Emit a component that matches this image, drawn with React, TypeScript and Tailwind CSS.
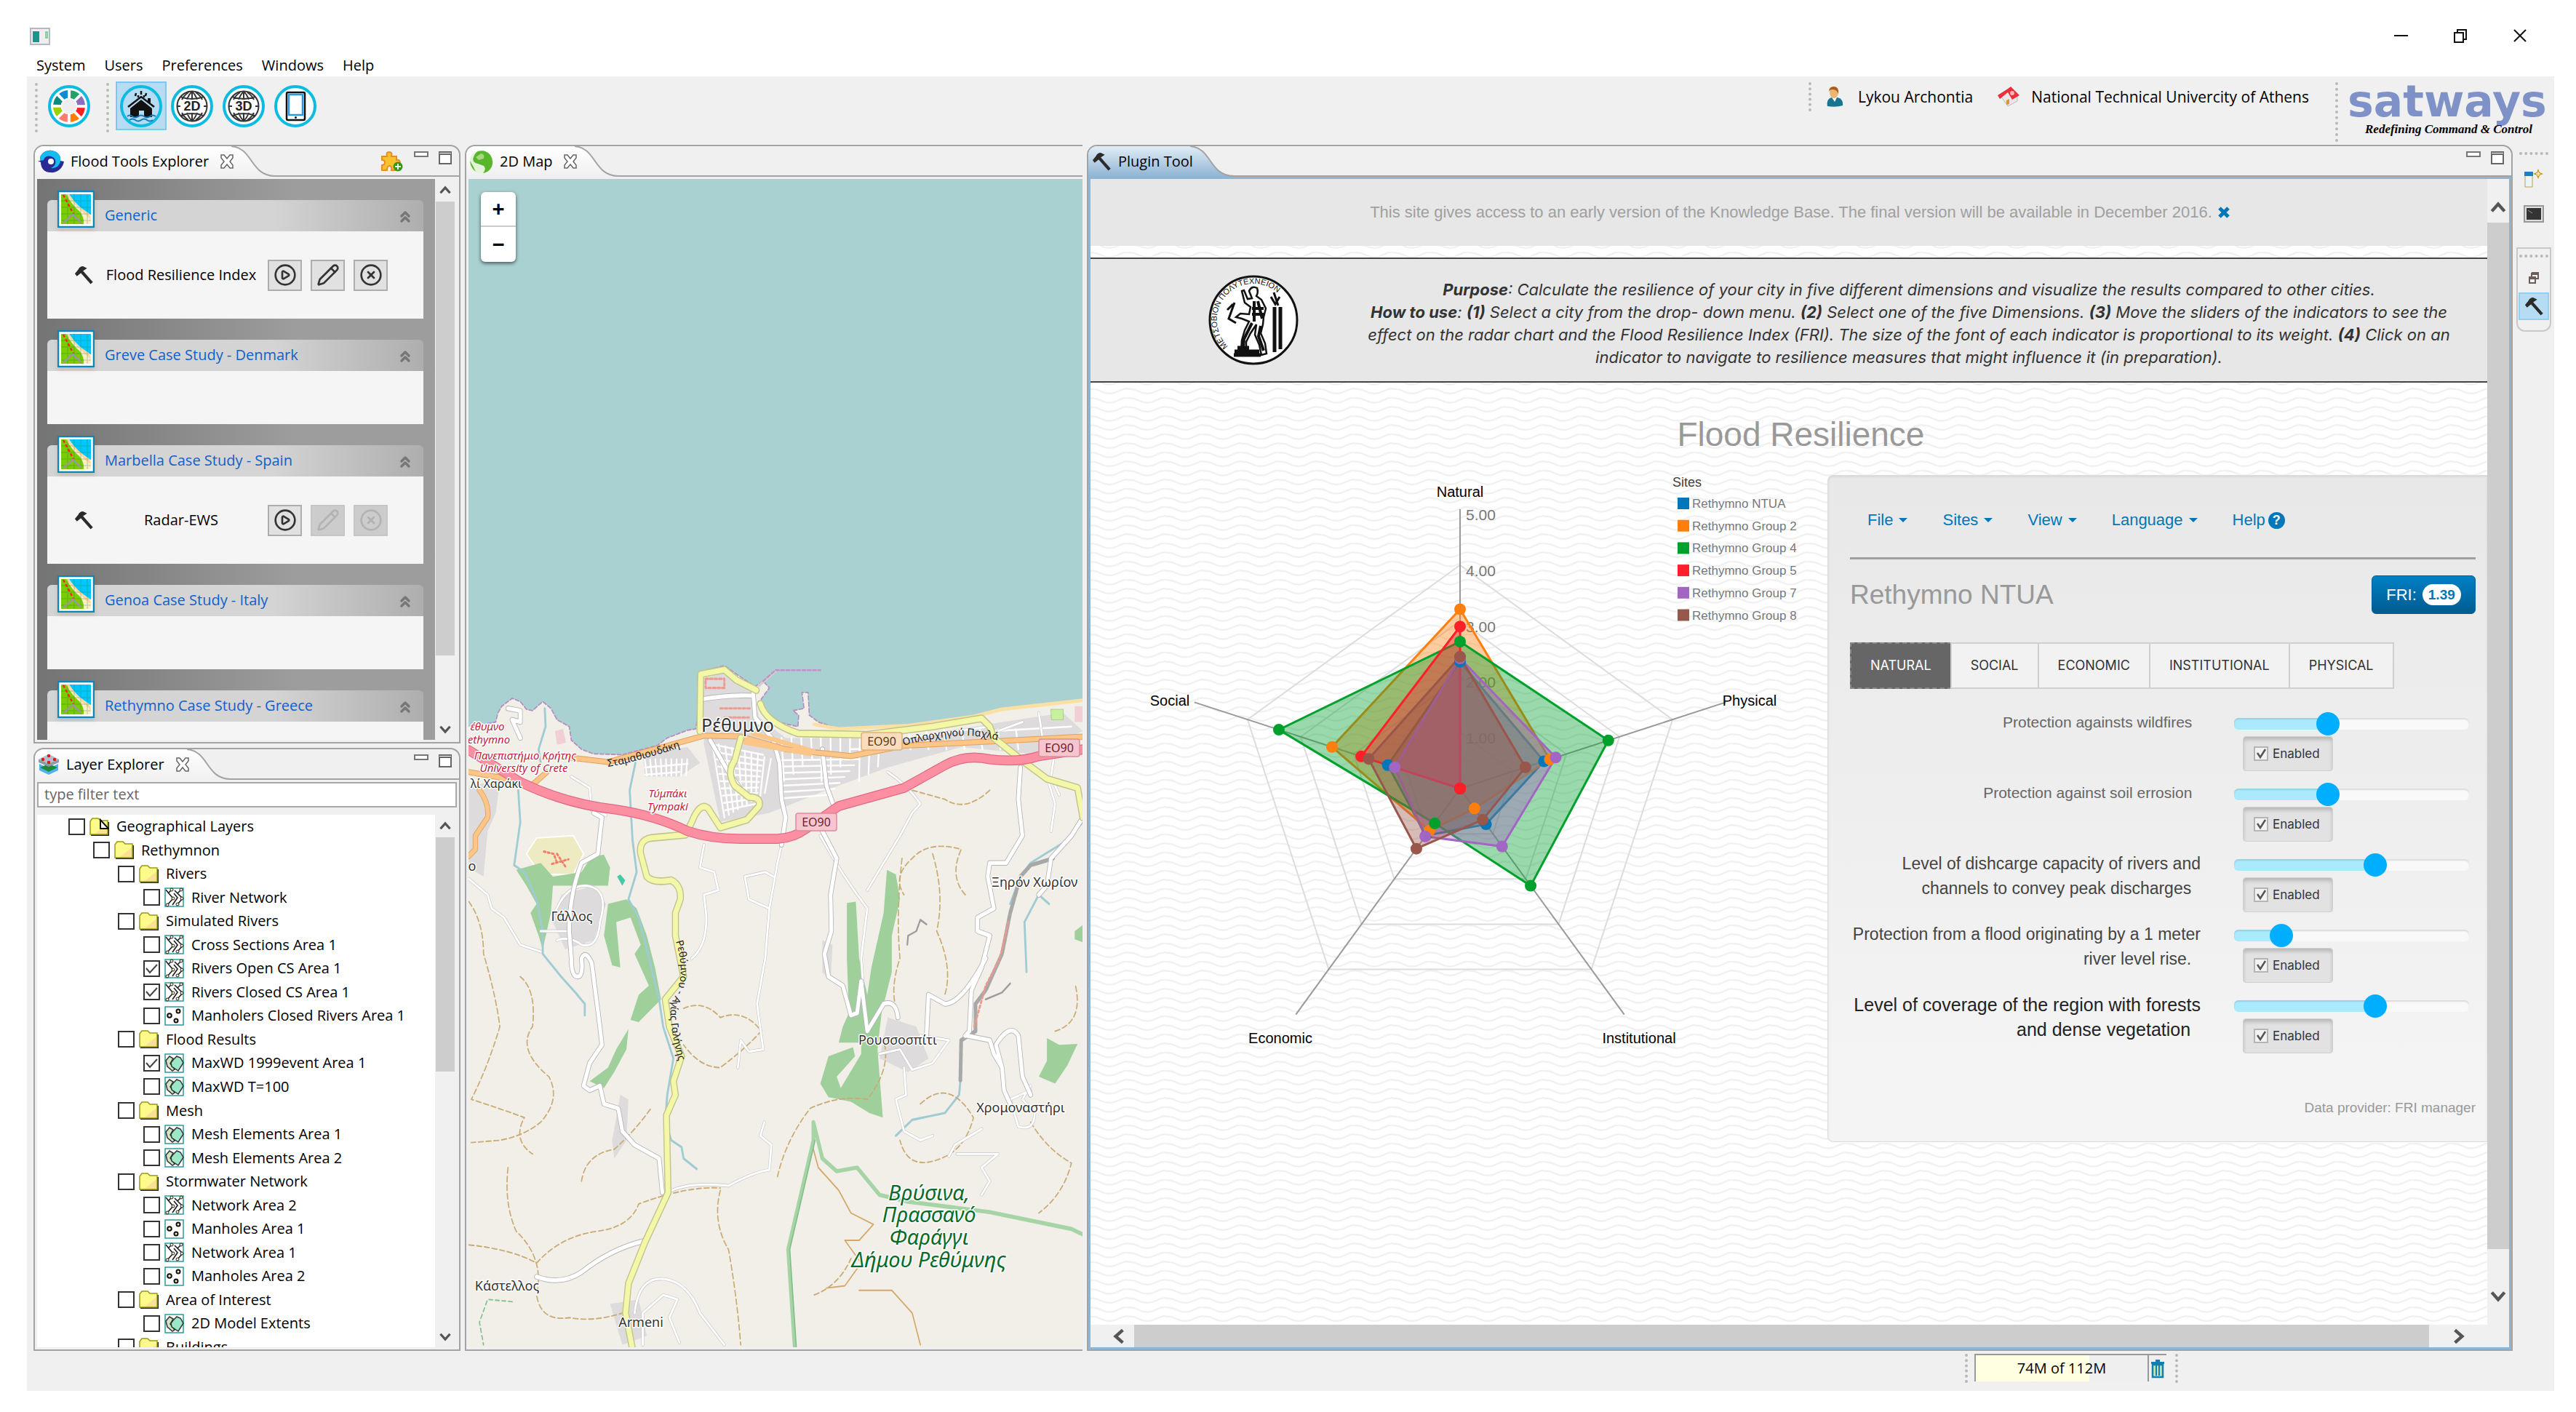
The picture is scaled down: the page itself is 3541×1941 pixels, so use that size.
import { useState } from "react";
import type { ReactNode } from "react";
import { ChevronsUp, CirclePlay, CircleX, Pencil } from "lucide-react";

/* ---------- small icons ---------- */

function Hammer({ className }: { className?: string }) {
  return (
    <svg viewBox="0 0 30 28" className={className} fill="none" aria-hidden="true">
      <path d="M2 12 L5 16 L11 11 L14 8 L20 4 L14 1 Q9 1 7 6 Z" fill="#2b2b2b" />
      <path d="M12 9 L27 26" stroke="#2b2b2b" strokeWidth="4.5" />
    </svg>
  );
}

function Chevron({ dir, className }: { dir: "up" | "down" | "left" | "right"; className?: string }) {
  const d = {
    up: "M3 15 L11 6 L19 15",
    down: "M3 7 L11 16 L19 7",
    left: "M15 3 L6 11 L15 19",
    right: "M7 3 L16 11 L7 19",
  }[dir];
  return (
    <svg viewBox="0 0 22 22" className={className} fill="none" aria-hidden="true">
      <path d={d} stroke="#555" strokeWidth="4" />
    </svg>
  );
}

function MapBadge() {
  return (
    <svg viewBox="0 0 51 51" className="size-[51px] shrink-0 drop-shadow-md" aria-hidden="true">
      <rect x="1" y="1" width="49" height="49" fill="#fff" stroke="#0a86b8" strokeWidth="2.5" />
      <rect x="5" y="5" width="41" height="41" fill="#00c8ff" />
      <path d="M16 5 Q24 20 46 33 V46 H5 V5 Z" fill="#fdeecb" />
      <path d="M16 5 Q26 20 38 28 Q46 33 46 40 Q30 26 11 5 Z" fill="#ffd9a0" />
      <path d="M5 5 H12 Q20 20 30 28 Q37 36 36 46 H5 Z" fill="#7ccc00" />
      <path d="M14 5V46 M23 5V46 M32 5V46 M41 5V46 M5 14H46 M5 23H46 M5 32H46 M5 41H46" stroke="#2a7a50" strokeOpacity=".25" strokeWidth="1.5" />
      <path d="M8 6 L22 32" stroke="#f22" strokeWidth="2.5" strokeDasharray="4 3" />
      <path d="M8 44 L21 33 L33 44" fill="none" stroke="#999" strokeWidth="2.5" />
    </svg>
  );
}

function Swirl() {
  return (
    <svg viewBox="0 0 36 32" className="h-8 w-9" aria-hidden="true">
      <path d="M3 15 C2 5 11 0 19 1 C28 2 32 9 31 15 L36 16 C34 27 25 32 17 31 C9 31 4 25 4 17 L0 15 Z" fill="#2a2a96" />
      <path d="M3 15 C2 5 11 0 19 1 C28 2 32 9 31 15 C30 23 23 26 18 25 C24 23 26 17 23 12 C19 7 10 7 8 14 Z" fill="#14bdf0" />
      <circle cx="18" cy="16" r="4" fill="#fff" />
    </svg>
  );
}

function LayersIcon() {
  return (
    <svg viewBox="0 0 30 30" className="size-[30px]" aria-hidden="true">
      <path d="M15 29 L2 23 V14 L15 20 L28 14 V23 Z" fill="#4eb4ee" />
      <path d="M15 25 L3 19 L15 14 L27 19 Z" fill="#1d8a3c" />
      <path d="M15 18 L1 12 L1 8 L15 1 L29 8 V12 Z" fill="#8e9aa6" />
      <path d="M15 14 L1 8 L15 1 L29 8 Z" fill="#b3bec9" />
      <g fill="#e11313">
        <circle cx="15" cy="3" r="2.2" />
        <circle cx="7" cy="8" r="2.2" />
        <circle cx="23" cy="8" r="2.2" />
        <circle cx="15" cy="12" r="2.2" />
      </g>
    </svg>
  );
}

function GreenGlobe() {
  return (
    <svg viewBox="0 0 33 33" className="size-[33px]" aria-hidden="true">
      <circle cx="16.500" cy="16.500" r="16" fill="#e4f3da" />
      <path d="M12 2 Q22 -1 29 7 Q34 15 31 23 Q27 31 19 32 Q24 26 20 22 L12 19 Q3 17 6 10 Q8 4 12 2Z" fill="#57b52e" />
      <path d="M16 5 Q22 6 20 12 L13 14 L9 10 Z" fill="#a5d97b" />
      <path d="M1 15 L5 22 L9 30 Q2 25 1 15Z" fill="#57b52e" />
    </svg>
  );
}

function PuzzleAdd() {
  return (
    <svg viewBox="0 0 30 28" className="h-7 w-[30px]" aria-hidden="true">
      <path d="M1 7 H8 Q6 1 11 1 Q16 1 14 7 H21 V12 Q26 11 26 16 Q25 19 21 18 V26 H14 Q15 20 11 20 Q8 20 8 26 H1 V19 Q5 19 5 15 Q5 12 1 12 Z" fill="#fbc02d" stroke="#e88c2c" strokeWidth="2" />
      <circle cx="23" cy="21" r="6.500" fill="#2f9a12" />
      <path d="M23 17 V25 M19 21 H27" stroke="#fff" strokeWidth="2" />
    </svg>
  );
}

function TabClose() {
  return (
    <svg viewBox="0 0 20 20" className="size-5" aria-hidden="true">
      <path d="M2 1 H6 L10 6 L14 1 H18 V5 L14 10 L18 15 V19 H14 L10 14 L6 19 H2 V15 L6 10 L2 5 Z" fill="#fff" stroke="#666" strokeWidth="1.5" />
    </svg>
  );
}

function Folder({ open }: { open?: boolean }) {
  return (
    <svg viewBox="0 0 27 25" className="h-[25px] w-[27px] shrink-0" aria-hidden="true">
      <path d="M2 25 V6 H27 V25 Z" fill="#222" />
      <path d="M1 23 V5 L4 1 H12 L15 4 H25 V23 Z" fill="#fdfa8c" stroke="#9a9a12" strokeWidth="1.500" />
      <path d="M8 22 L24 9 V22 Z" fill="#f9cf9c" fillOpacity=".6" />
      {open && <path d="M15 3 V15 H26 Z" fill="#fff" stroke="#111" strokeWidth="2" />}
    </svg>
  );
}

function LayerGlyph({ kind }: { kind: string }) {
  return (
    <svg viewBox="0 0 27 27" className="size-[27px] shrink-0" aria-hidden="true">
      <rect x="1" y="1" width="25" height="25" fill="#fff" stroke="#2e9a9a" strokeWidth="1.500" />
      {kind === "line" && (
        <g fill="none" stroke="#222" strokeWidth="1.700">
          <path d="M2 3 L6 8 L12 15 L4 24 M9 4 L5 8 M14 4 L19 9 L25 15 L18 23 M23 3 L18 8 M13 8 L18 14 L11 24" />
          <g fill="#f6f3c4" strokeWidth="1">
            <circle cx="10" cy="3" r="2" />
            <circle cx="23" cy="3" r="2" />
            <circle cx="12" cy="15" r="2" />
            <circle cx="24" cy="15" r="2" />
            <circle cx="4" cy="24" r="2" />
            <circle cx="18" cy="23" r="2" />
          </g>
        </g>
      )}
      {kind === "point" && (
        <g fill="#f6f3c4" stroke="#111" strokeWidth="2">
          <circle cx="7" cy="13" r="2.800" />
          <circle cx="19" cy="7" r="2.500" />
          <circle cx="16" cy="20" r="2.500" />
        </g>
      )}
      {kind === "area" && (
        <g fill="#9be8c6" stroke="#333" strokeWidth="1.500">
          <path d="M2 10 L7 4 L12 7 L8 14 L14 22 L11 24 L4 18 Z" fill="#cfe6c4" />
          <path d="M12 9 L17 4 L22 6 L26 13 L19 24 L10 18 L9 13 Z" />
        </g>
      )}
    </svg>
  );
}

function RoundTool({ children }: { children: ReactNode }) {
  return (
    <svg viewBox="0 0 58 58" className="size-[58px]" aria-hidden="true">
      <circle cx="29" cy="29" r="27" fill="#fdfdfd" stroke="#0bbbe0" strokeWidth="4" />
      {children}
    </svg>
  );
}

function GlobeText({ text }: { text: string }) {
  return (
    <RoundTool>
      <g fill="none" stroke="#333" strokeWidth="2">
        <circle cx="29" cy="29" r="20.500" />
        <path d="M29 9 V20 M29 38 V49 M9 29 H13 M45 29 H49 M22 20 Q25 12 29 9 Q33 12 36 20 M22 38 Q25 46 29 49 Q33 46 36 38 M15 20 Q18 14 24 10 M43 20 Q40 14 34 10 M15 38 Q18 44 24 48 M43 38 Q40 44 34 48 M13 16 Q29 22 45 16 M13 42 Q29 36 45 42" />
      </g>
      <text x="29" y="35" textAnchor="middle" fontSize="18" fontWeight="bold" fill="#222" fontFamily="Liberation Sans, sans-serif">
        {text}
      </text>
    </RoundTool>
  );
}

const WHEEL = ["#0f8bd0", "#24a06a", "#8a6fc0", "#fb2020", "#ff8000", "#ff7d6e", "#9cd000", "#0a8a80"];

function ColourWheel() {
  return (
    <RoundTool>
      {WHEEL.map((c, i) => (
        <path key={c} d="M22.500 8 A22 22 0 0 1 35.500 8 L31.500 18 Q29 17 26.500 18 Z" fill={c} transform={`rotate(${i * 45 - 22} 29 29)`} />
      ))}
      <circle cx="29" cy="29" r="10" fill="#eee" />
    </RoundTool>
  );
}

function FloodHouse() {
  return (
    <svg viewBox="0 0 58 58" className="size-[58px]" aria-hidden="true">
      <circle cx="29" cy="29" r="27" fill="#b5dcf3" stroke="#0bbbe0" strokeWidth="4" />
      <path d="M11 30 L29 16 L47 30" fill="none" stroke="#111" strokeWidth="2.500" />
      <path d="M14 32 L29 20 L44 32 V44 H33 V35 H26 V44 H14 Z" fill="#111" />
      <path d="M40 18 V24" stroke="#111" strokeWidth="4" />
      <path d="M22 11 L21 15 M29 8 V13 M36 11 L35 15 M25 14 V17 M33 14 V17" stroke="#111" strokeWidth="2.500" />
      <path d="M10 43 Q13 40 17 43 T25 43 T33 43 T41 43 T49 43 M13 48 Q17 45 21 48 T29 48 T37 48 T45 48" fill="none" stroke="#1377b8" strokeWidth="2" />
    </svg>
  );
}

/* ---------- window chrome ---------- */

function Grip({ className }: { className: string }) {
  return <span className={`border-dotted border-[#b8b8b8] ${className}`} />;
}

function MinMax() {
  return (
    <div className="flex items-start gap-[14px]">
      <button type="button" aria-label="Minimize" className="h-2 w-5 border-2 border-[#777] bg-white" />
      <button type="button" aria-label="Maximize" className="h-[18px] w-[18px] border-2 border-t-[5px] border-double border-[#666] bg-white" />
    </div>
  );
}

type PanelProps = {
  id: string;
  title: string;
  icon: ReactNode;
  closable?: boolean;
  active?: boolean;
  controls?: ReactNode;
  className?: string;
  children: ReactNode;
};

function Panel({ id, title, icon, closable, active, controls, className = "", children }: PanelProps) {
  const from = active ? "#e2edf5" : "#ffffff";
  const to = active ? "#8fb4d4" : "#f0f0f0";
  return (
    <section className={`flex min-h-0 min-w-0 flex-col overflow-hidden rounded-tl-[14px] border-2 border-[#a3a3a3] bg-[#f0f0f0] ${className}`}>
      <header className="flex h-[42px] shrink-0">
        <div
          className={`flex items-center gap-[9px] pl-1 ${
            active ? "bg-linear-to-b from-[#e2edf5] to-[#8fb4d4]" : "bg-linear-to-b from-white to-[#f0f0f0]"
          }`}
        >
          {icon}
          <h2>{title}</h2>
          {closable && (
            <button type="button" aria-label={`Close ${title}`} className="ml-[6px]">
              <TabClose />
            </button>
          )}
        </div>
        <svg viewBox="0 0 60 42" className="-ml-1 h-[42px] w-[60px] shrink-0" aria-hidden="true">
          <defs>
            <linearGradient id={id} x1="0" y1="0" x2="0" y2="1">
              <stop offset="0" stopColor={from} />
              <stop offset="1" stopColor={to} />
            </linearGradient>
          </defs>
          <path d="M4 0 C30 2 26 41 60 41 V42 H3 V0 Z" fill={`url(#${id})`} />
          <path d="M0 0 C30 2 26 41 60 41" fill="none" stroke="#a3a3a3" strokeWidth="2" />
        </svg>
        <div className="flex flex-1 justify-end border-b-2 border-[#a3a3a3] pt-[7px] pr-[10px]">{controls}</div>
      </header>
      <div className={`flex min-h-0 flex-1 flex-col p-[3px] ${active ? "bg-[#8fb4d4]" : ""}`}>{children}</div>
    </section>
  );
}

function VScroll({ size, wide }: { size: string; wide?: boolean }) {
  return (
    <div className={`flex w-[30px] shrink-0 flex-col bg-[#f0f0f0] ${wide ? "" : "pr-[3px] pl-px"}`}>
      <button type="button" aria-label="Scroll up" className={`flex shrink-0 justify-center ${wide ? "h-[60px] items-end pb-2" : "h-[31px] items-center"}`}>
        <Chevron dir="up" className={wide ? "size-6" : "size-[18px]"} />
      </button>
      <div className="flex-1">
        <div className={`bg-[#cdcdcd] ${size}`} />
      </div>
      <button type="button" aria-label="Scroll down" className={`flex shrink-0 justify-center ${wide ? "h-[60px] items-start pt-2" : "h-[31px] items-center"}`}>
        <Chevron dir="down" className={wide ? "size-6" : "size-[18px]"} />
      </button>
    </div>
  );
}

/* ---------- flood tools ---------- */

type Tool = { name: string; running: boolean };

const GROUPS: { title: string; tool?: Tool }[] = [
  { title: "Generic", tool: { name: "Flood Resilience Index", running: true } },
  { title: "Greve Case Study - Denmark" },
  { title: "Marbella Case Study - Spain", tool: { name: "Radar-EWS", running: false } },
  { title: "Genoa Case Study - Italy" },
  { title: "Rethymno Case Study - Greece" },
];

function ToolButton({ label, disabled, children }: { label: string; disabled?: boolean; children: ReactNode }) {
  return (
    <button
      type="button"
      aria-label={label}
      disabled={disabled}
      className="flex h-[43px] w-[47px] items-center justify-center border-2 border-[#adadad] bg-[#e1e1e1] text-[#333] disabled:border-[#c6c6c6] disabled:bg-[#cccccc] disabled:text-[#b3b3b3]"
    >
      {children}
    </button>
  );
}

function FloodTools() {
  return (
    <div className="flex min-h-0 flex-1">
      <div className="flex-1 overflow-hidden bg-linear-to-r from-[#747474] to-[#9d9d9d] to-65% pt-[29px] pr-4 pl-[14px]">
        {GROUPS.map((g) => (
          <div key={g.title} className="mb-[29px]">
            <div className="flex h-[43px] items-end rounded-t-md bg-linear-to-r from-[#d4d4d4] from-60% to-[#aeaeae] pr-[13px] pl-[14px]">
              <div className="mb-[5px] flex flex-1 items-end gap-[14px]">
                <MapBadge />
                <h3 className="flex-1 leading-[34px] text-[#1160cc]">{g.title}</h3>
                <button type="button" aria-label={`Collapse ${g.title}`} className="mb-[3px]">
                  <ChevronsUp className="size-6 text-[#777]" strokeWidth={3.5} />
                </button>
              </div>
            </div>
            {g.tool ? (
              <div className="flex h-[120px] items-center bg-[#f5f5f5] pl-[35px]">
                <Hammer className="h-[26px] w-[30px]" />
                <span className="w-[238px] text-center">{g.tool.name}</span>
                <div className="flex gap-3">
                  <ToolButton label="Run">
                    <CirclePlay className="size-8" strokeWidth={2} />
                  </ToolButton>
                  <ToolButton label="Edit" disabled={!g.tool.running}>
                    <Pencil className="size-8" strokeWidth={2} />
                  </ToolButton>
                  <ToolButton label="Stop" disabled={!g.tool.running}>
                    <CircleX className="size-8" strokeWidth={2} />
                  </ToolButton>
                </div>
              </div>
            ) : (
              <div className="h-[73px] bg-[#f5f5f5]" />
            )}
          </div>
        ))}
      </div>
      <VScroll size="h-[88%]" />
    </div>
  );
}

/* ---------- layer tree ---------- */

type Node = { label: string; depth: number; kind: string; checked?: boolean };

const LAYERS: Node[] = [
  { label: "Geographical Layers", depth: 0, kind: "root" },
  { label: "Rethymnon", depth: 1, kind: "folder" },
  { label: "Rivers", depth: 2, kind: "folder" },
  { label: "River Network", depth: 3, kind: "line" },
  { label: "Simulated Rivers", depth: 2, kind: "folder" },
  { label: "Cross Sections Area 1", depth: 3, kind: "line" },
  { label: "Rivers Open CS Area 1", depth: 3, kind: "line", checked: true },
  { label: "Rivers Closed CS Area 1", depth: 3, kind: "line", checked: true },
  { label: "Manholers Closed Rivers Area 1", depth: 3, kind: "point" },
  { label: "Flood Results", depth: 2, kind: "folder" },
  { label: "MaxWD 1999event Area 1", depth: 3, kind: "area", checked: true },
  { label: "MaxWD T=100", depth: 3, kind: "area" },
  { label: "Mesh", depth: 2, kind: "folder" },
  { label: "Mesh Elements Area 1", depth: 3, kind: "area" },
  { label: "Mesh Elements Area 2", depth: 3, kind: "area" },
  { label: "Stormwater Network", depth: 2, kind: "folder" },
  { label: "Network Area 2", depth: 3, kind: "line" },
  { label: "Manholes Area 1", depth: 3, kind: "point" },
  { label: "Network Area 1", depth: 3, kind: "line" },
  { label: "Manholes Area 2", depth: 3, kind: "point" },
  { label: "Area of Interest", depth: 2, kind: "folder" },
  { label: "2D Model Extents", depth: 3, kind: "area" },
  { label: "Buildings", depth: 2, kind: "folder" },
];

const INDENT = ["pl-[43px]", "pl-[77px]", "pl-[111px]", "pl-[146px]"];

function LayerTree() {
  return (
    <>
      <input
        type="text"
        aria-label="Filter layers"
        placeholder="type filter text"
        className="h-[35px] border-2 border-[#a8a8a8] bg-white px-2 pb-[2px] placeholder:text-[#666]"
      />
      <div className="mt-[10px] flex min-h-0 flex-1">
        <div className="flex-1 overflow-hidden bg-white">
          <ul className="grid h-[748px] auto-rows-fr">
            {LAYERS.map((n) => (
              <li key={n.label} className={INDENT[n.depth]}>
                <label className="flex h-full items-center">
                  <span className="mr-[6px] grid size-[23px] shrink-0">
                    <input
                      type="checkbox"
                      defaultChecked={n.checked}
                      className="peer col-start-1 row-start-1 size-[23px] appearance-none border-2 border-[#333] bg-white"
                    />
                    <svg viewBox="0 0 23 23" className="pointer-events-none invisible col-start-1 row-start-1 peer-checked:visible" aria-hidden="true">
                      <path d="M4 11 L9 17 L19 6" fill="none" stroke="#444" strokeWidth="2" />
                    </svg>
                  </span>
                  {n.kind === "folder" || n.kind === "root" ? <Folder open={n.kind === "root"} /> : <LayerGlyph kind={n.kind} />}
                  <span className="ml-[10px] leading-7">{n.label}</span>
                </label>
              </li>
            ))}
          </ul>
        </div>
        <VScroll size="h-[48%]" />
      </div>
    </>
  );
}

/* ---------- map ---------- */

const TRACKS = [
  "M24 575 Q60 620 60 690 Q90 780 100 850 Q70 940 30 1010 Q100 1030 160 1050 Q130 1100 180 1130",
  "M150 740 Q190 770 180 850 Q140 900 220 960 Q250 1010 200 1060 Q160 1090 100 1100 L30 1105",
  "M120 1160 Q110 1240 140 1300 Q210 1360 190 1440 Q200 1500 270 1490 Q330 1500 400 1480",
  "M24 1330 Q130 1340 190 1370 Q250 1310 340 1300 Q420 1290 440 1240 Q560 1200 640 1205",
  "M550 810 Q600 790 640 830 Q700 810 740 860 Q700 900 640 940 Q590 940 550 890",
  "M640 1210 Q620 1280 660 1340 Q680 1440 690 1550",
  "M780 1180 Q800 1100 860 1030 Q930 1000 1000 1010 Q1060 940 1040 880",
  "M1085 480 Q1070 600 1080 700 Q1050 780 1080 830",
  "M1160 470 Q1190 560 1170 640 Q1210 720 1190 780",
  "M1240 560 Q1200 520 1230 460 Q1150 440 1110 480 Q1060 520 1090 560",
  "M1130 1020 Q1200 960 1260 1050 Q1240 1120 1180 1140 Q1100 1170 1080 1100",
  "M1400 1060 Q1440 1120 1500 1150 Q1480 1220 1420 1260",
  "M1300 330 Q1240 380 1190 350 L1110 330",
  "M300 1190 Q310 1130 380 1120 Q430 1080 470 1030",
  "M1460 860 Q1530 840 1510 760",
  "M870 1440 Q930 1420 960 1360",
];

const ROADS_THIN = [
  "M24 525 L70 560 L80 590 L110 610 L150 670 L200 685",
  "M275 300 L320 325 L325 375 L360 385",
  "M570 700 Q610 670 605 600 L600 560 L635 550 L625 510 L590 500 L600 450",
  "M790 450 L780 490 L760 590 L750 700 L730 800 L745 900 L710 905 L690 880 L683 940",
  "M760 590 L710 570 L700 520 L750 510 L770 520",
  "M885 430 Q940 520 1000 590 L985 700 L990 760",
  "M1000 550 L1080 430 L1110 380 L1130 360 Q1100 320 1050 290",
  "M510 1215 Q560 1190 660 1200 Q720 1170 760 1165 L765 1110 L738 1090 L748 1060",
  "M430 1480 Q440 1400 500 1405 Q560 1410 590 1480 L650 1550",
  "M450 1550 L450 1480 L500 1440 L535 1450 L515 1490 L540 1545",
  "M235 600 Q260 540 310 540 Q370 545 345 620 Q340 680 300 670 Q270 650 240 660 M200 640 L270 640",
  "M1400 980 L1380 1010 L1410 1040 Q1410 1080 1370 1070 L1350 1010 L1400 990",
  "M1200 1135 L1215 1110 L1280 1075 M1220 1130 L1320 1130 L1280 1160 L1300 1190 L1280 1220",
  "M1090 940 L1095 1000 L1070 1010 L1090 1080 L1130 1100 L1160 1090",
  "M1130 870 L1200 880 L1160 930 L1110 945 L1080 900 L1030 910",
  "M1440 300 L1460 360 L1450 420 M1380 180 L1320 200 M1420 160 L1430 220 M1460 240 L1450 300 L1470 340",
];

const ROADS = [
  "M330 380 L350 390 L340 470 L300 490 Q270 560 270 640 L275 700 Q275 740 290 740 Q305 740 300 700 Q310 680 325 710 L345 850 L350 890 L320 930 L305 980 L320 990 L345 980 L355 1020 L390 1030 L400 1080 L430 1110 L490 1140 L498 1215",
  "M190 1400 Q250 1420 300 1390 Q370 1340 450 1322",
  "M615 220 L660 290 L700 340 M720 110 L725 170 L770 220 L785 270 L790 350 L800 390 L790 450",
  "M595 130 Q660 120 720 122 M890 240 L900 320 L920 370 L890 420 L925 480 L910 560 L912 640 L895 690 L905 740 L940 760 L960 825 L975 820 L985 750 L1000 860 L1040 800 Q1070 790 1075 830",
  "M1375 280 L1370 350 L1380 430 L1340 490 L1300 490 L1295 520 L1310 590 L1270 610 L1270 640 L1300 650 L1280 720 L1255 770 L1250 860 L1240 870",
  "M1290 700 Q1230 800 1190 800 L1150 780 L1145 870",
  "M1245 870 L1300 880 L1310 910 L1330 940 L1315 890 Q1350 840 1370 870 L1380 960 L1400 1000 M1330 940 L1335 990 L1350 1020",
  "M1528 390 L1500 430 L1450 480 L1440 540 L1420 560",
  "M120 150 L150 155 L150 180 L130 175 L150 215",
];

const MOTORWAY =
  "M24 242 L150 312 Q260 360 380 372 Q480 385 560 420 Q620 438 700 437 L780 437 Q820 435 850 415 L930 365 L1090 325 L1190 275 Q1240 250 1300 262 Q1370 270 1420 255 L1530 240";

function CityGrid() {
  const lines: ReactNode[] = [];
  for (let i = 0; i < 10; i++) {
    lines.push(<path key={`a${i}`} d={`M${620 + i * 16} ${225 + i * 4} L${650 + i * 11} ${390 - i * 6}`} />);
    lines.push(<path key={`b${i}`} d={`M${625 + i * 3} ${230 + i * 16} L${745 - i * 2} ${252 + i * 12}`} />);
  }
  for (let i = 0; i < 14; i++) {
    if (i < 11) lines.push(<path key={`c${i}`} d={`M${790 + i * 24} ${215} L${796 + i * 23} ${310 - (i % 4) * 16}`} />);
    if (i < 7) lines.push(<path key={`d${i}`} d={`M${790} ${264 + i * 14} L${980 - i * 12} ${262 + i * 13}`} />);
    if (i < 9) lines.push(<path key={`e${i}`} d={`M${455 + i * 13} ${262} L${460 + i * 12} ${298}`} />);
    if (i % 2 === 0) lines.push(<path key={`f${i}`} d={`M${1100 + i * 22} ${196} L${1106 + i * 22} ${240}`} />);
  }
  return (
    <g stroke="#fff" strokeWidth="4" fill="none">
      {lines}
      <path d="M455 280 L560 272 M1090 216 L1300 190 M960 240 L1100 235 M1310 200 L1500 190 M455 296 L540 290" />
    </g>
  );
}

function MapDrawing() {
  return (
    <svg viewBox="0 0 845 1606" preserveAspectRatio="xMinYMin slice" className="min-h-0 w-full flex-1" fontFamily="Noto Sans, sans-serif">
      <rect width="845" height="1606" fill="#a9d1d1" />
      <g transform="translate(-13 634) scale(.5612 .625)" strokeLinejoin="round" strokeLinecap="round">
        <path
          d="M0 190 L45 188 L90 180 L95 160 L105 145 L130 128 L150 135 L165 152 L180 155 L205 135 L225 150 L240 175 L270 190 L275 220 L300 240 L330 250 L400 252 L450 240 L485 232 L510 215 L560 198 L580 195 L587 150 L585 80 L600 68 L650 56 L675 72 L725 102 L745 90 L760 105 L740 130 L755 160 L780 180 L830 190 L832 165 L818 155 L845 150 L840 115 L855 115 L858 165 L880 180 L930 195 L1100 188 L1260 168 L1330 150 L1560 128 L1560 1600 L0 1600 Z"
          fill="#f2efe9"
          stroke="#b58fc0"
          strokeWidth="3"
          strokeDasharray="9 5"
        />
        <path d="M735 100 L775 68" stroke="#d6cfd4" strokeWidth="6" />
        <path d="M745 90 L775 66 L885 66" fill="none" stroke="#c58fc8" strokeWidth="4" strokeDasharray="8 5" />
        {/* built-up land */}
        <g fill="#dedbdd" stroke="none">
          <path d="M597 85 L650 72 L720 110 L735 170 L800 215 L1090 215 L1330 180 L1480 160 L1528 200 L1400 250 L1230 235 L1050 280 L900 330 L760 380 L640 400 L600 230 Z" />
          <path d="M450 250 L560 235 L590 270 L540 300 L455 300 Z" />
          <path d="M24 320 L100 310 L90 380 L70 420 L60 520 L24 500 Z" />
          <path d="M250 560 L330 540 L360 580 L330 660 L260 680 L230 620 Z" />
          <path d="M1050 830 L1120 850 L1150 920 L1100 950 L1030 920 Z" />
          <path d="M395 1000 L415 1010 L410 1100 L380 1140 L375 1100 Z" />
          <path d="M370 1460 L440 1450 L460 1530 L400 1550 Z" />
          <path d="M890 660 L915 670 L910 750 L890 730 Z" />
        </g>
        <path d="M604 85 H650 V105 H604 Z M640 150 H715 M650 170 H710" fill="none" stroke="#ee9a90" strokeWidth="5" strokeDasharray="6 5" />
        <path d="M165 470 L190 435 L280 430 L305 470 L280 515 L200 515 Z" fill="#eeeac2" stroke="#fff" strokeWidth="3" />
        <path d="M208 465 L232 470 L240 490 M228 492 L268 482 M240 470 L262 500" fill="none" stroke="#f0806c" strokeWidth="5" strokeDasharray="4 6" />
        <path d="M1450 152 L1480 152 L1480 175 L1452 175 Z" fill="#c7f19c" stroke="#8cbb60" />
        <path d="M235 200 L255 195 L262 225 L240 230 Z M1508 145 L1530 145 L1530 180 L1508 180 Z" fill="#f2cfd2" />
        <path d="M870 185 L930 195 L1100 188 L1260 168 L1330 152 L1530 132" fill="none" stroke="#fbe0a4" strokeWidth="8" />
        {/* forest */}
        <g fill="#9fd09c" stroke="none">
          <path d="M140 505 L200 490 L230 520 L300 510 L325 475 L355 472 L370 500 L365 540 L230 540 L225 600 L205 680 L195 650 L175 600 L190 580 L165 540 Z" />
          <path d="M365 580 L410 570 L435 590 L460 650 L480 720 L495 790 L440 840 L420 835 L440 780 L465 760 L445 720 L430 690 L445 670 L420 610 L385 620 L395 720 L375 715 L355 650 Z" />
          <path d="M415 855 L410 900 L380 950 L355 985 L320 970 L365 940 L385 900 Z" />
          <path d="M950 578 L972 575 L980 700 L1000 780 L1010 720 L1040 600 L1048 505 L1070 515 L1080 570 L1060 650 L1060 730 L1035 820 L1025 900 L1038 1050 L1005 1040 L960 1015 L905 1005 L885 975 L905 915 L965 895 L970 915 L925 960 L935 985 L985 910 L985 885 L930 885 L940 850 L955 820 L950 700 Z" />
          <path d="M1440 875 L1470 890 L1515 888 L1490 935 L1460 975 L1420 960 L1440 925 Z" />
          <path d="M1508 640 L1530 625 L1530 665 L1508 658 Z" />
        </g>
        <path d="M387 520 L395 515 L407 528 L400 540 Z" fill="#48c8a4" />
        {/* water */}
        <g fill="none" stroke="#9fcbd3" strokeWidth="5">
          <path d="M145 330 L150 400 L135 495 L160 510 L190 570 L205 640 L205 690 L250 740 L285 775 L308 800 L308 825" />
          <path d="M432 270 L418 330 L425 440 L435 510 L415 570 L440 610 L460 680 L490 790 L500 850 L525 920 L510 1000 L505 1060 L520 1100 L545 1115 L550 1140 L582 1163" />
          <path d="M210 150 L212 190 L195 240 L200 270" />
          <path d="M1228 968 L1225 1000 L1190 1040 L1110 1055 L1070 1090 M1390 730 L1385 620 L1420 560 L1445 580 M1528 400 L1490 440 L1400 490 L1375 520 L1350 580" />
        </g>
        <path d="M1455 480 L1400 495 L1375 520 L1350 600 L1330 690 L1290 770 L1265 800 L1265 860 L1230 880 L1228 968" fill="none" stroke="#a8a8a8" strokeWidth="9" strokeDasharray="14 4" />
        <path d="M1345 620 L1325 700 L1290 760 L1262 850" fill="none" stroke="#e99a90" strokeWidth="5" strokeDasharray="5 6" />
        <path d="M1290 790 L1330 775 L1350 755 M1100 650 L1120 640 L1130 615 L1145 625 M1100 650 L1098 670" fill="none" stroke="#9c9c9c" strokeWidth="4" />
        <g fill="none" stroke="#c9ab74" strokeWidth="3" strokeDasharray="12 7">
          {TRACKS.map((d) => (
            <path key={d} d={d} />
          ))}
        </g>
        <path d="M868 1120 L880 1160 L930 1210 L960 1260 L1015 1285 L980 1320 L945 1320 L985 1370 L945 1420 L900 1425 M980 1430 L1060 1430 L1110 1480 L1130 1550" fill="none" stroke="#d4a86a" strokeWidth="3" />
        <path d="M130 1455 L70 1450 L50 1500 L60 1550" fill="none" stroke="#80c08c" strokeWidth="3" strokeDasharray="9 7" />
        {/* park boundary */}
        <g fill="none" stroke="#a6d4a6">
          <path d="M822 1554 L806 1340 L868 1100 L868 1060 L890 1140 L925 1168 L975 1160 L1030 1220 L1100 1235 L1300 1258 L1500 1295 L1530 1308" strokeWidth="9" />
          <path d="M826 1554 L810 1340 L872 1100" stroke="#84bf8b" strokeWidth="3" />
        </g>
        <CityGrid />
        <g fill="none" stroke="#c4c2c4" strokeWidth="7">
          {ROADS_THIN.map((d) => (
            <path key={d} d={d} />
          ))}
        </g>
        <g fill="none" stroke="#fff" strokeWidth="5">
          {ROADS_THIN.map((d) => (
            <path key={d} d={d} />
          ))}
        </g>
        <g fill="none" stroke="#b6b4b6" strokeWidth="12">
          {ROADS.map((d) => (
            <path key={d} d={d} />
          ))}
        </g>
        <g fill="none" stroke="#fff" strokeWidth="9">
          {ROADS.map((d) => (
            <path key={d} d={d} />
          ))}
        </g>
        {/* secondary roads */}
        <g fill="none" stroke="#e2a05c" strokeWidth="13">
          <path d="M270 258 L365 268 L480 240 L600 210 L690 212 L800 240 L960 255 L1090 232 L1320 222 L1530 212" />
          <path d="M24 290 L100 302 L180 318 L215 290 M50 330 Q75 360 70 390 L40 430 L40 460 L24 475" />
        </g>
        <g fill="none" stroke="#fbc687" strokeWidth="10">
          <path d="M270 258 L365 268 L480 240 L600 210 L690 212 L800 240 L960 255 L1090 232 L1320 222 L1530 212 M700 225 L860 250 M720 205 L870 245" />
          <path d="M24 290 L100 302 L180 318 L215 290 M50 330 Q75 360 70 390 L40 430 L40 460 L24 475" />
        </g>
        {[17, 12].map((w) => (
          <g key={w} fill="none" stroke={w === 17 ? "#c0c48c" : "#f4f7a8"} strokeWidth={w}>
            <path d="M590 200 L592 75 L650 65 L680 88 L728 110 M738 140 Q750 180 830 205 L1000 208 L1160 190 L1280 172 L1300 190 L1310 215 L1380 265 L1440 305 L1515 325 L1528 390" />
            <path d="M690 215 L675 265 Q655 290 675 320 L710 345 Q740 345 735 365 L705 395 L640 412 L610 370 Q590 355 570 400 L555 428 L470 435 Q440 440 445 470 L460 520 Q475 535 520 528 Q545 540 542 570 L530 600 L530 650 L550 740 L505 790 L515 850 L545 915 L525 970 L530 1000 L508 1045 L512 1215 L455 1325 L415 1415 L408 1480 L425 1560" />
          </g>
        ))}
        <path d={MOTORWAY} fill="none" stroke="#e06a84" strokeWidth="22" />
        <path d={MOTORWAY} fill="none" stroke="#fd8fa3" strokeWidth="18" />
      </g>

      <g stroke="#fff" strokeWidth="3" paintOrder="stroke" strokeLinejoin="round" fill="#333" textAnchor="middle">
        <text x="370" y="760" fontSize="25">Ρέθυμνο</text>
        <g fontSize="18">
          <text x="38" y="837" fontSize="16">λί Χαράκι</text>
          <text x="142" y="1020">Γάλλος</text>
          <text x="778" y="973">Ξηρόν Χωρίον</text>
          <text x="590" y="1190">Ρουσσοσπίτι</text>
          <text x="759" y="1283">Χρομοναστήρι</text>
          <text x="53" y="1528">Κάστελλος</text>
          <text x="237" y="1578">Armeni</text>
          <text x="5" y="951">ο</text>
        </g>
        <g fontSize="15" fontStyle="italic" fill="#c0223b">
          <text x="26" y="758">έθυμνο</text>
          <text x="28" y="776">ethymno</text>
          <text x="78" y="798">Πανεπιστήμιο Κρήτης</text>
          <text x="76" y="815">University of Crete</text>
          <text x="274" y="850">Τύμπάκι</text>
          <text x="274" y="868">Tympaki</text>
        </g>
        <g fontSize="29" fontStyle="italic" fill="#0a6b2c">
          <text x="633" y="1404">Βρύσινα,</text>
          <text x="633" y="1434">Πρασσανό</text>
          <text x="633" y="1465">Φαράγγι</text>
          <text x="633" y="1496">Δήμου Ρεθύμνης</text>
        </g>
      </g>
      <path id="st1" d="M192 808 Q230 802 298 779" fill="none" />
      <path id="st2" d="M598 779 Q680 756 728 772" fill="none" />
      <path id="st3" d="M285 1048 Q300 1096 281 1128 Q270 1150 294 1230" fill="none" />
      <g fontSize="14" fill="#222">
        <text>
          <textPath href="#st1">Σταμαθιουδάκη</textPath>
        </text>
        <text>
          <textPath href="#st2">Οπλαρχηγού Παχλά</textPath>
        </text>
        <text>
          <textPath href="#st3">Ρεθύμνου - Αγίας Γαλήνης</textPath>
        </text>
      </g>
      {[
        { x: 568, y: 773, fill: "#f8dcbc", line: "#e3ae7a", text: "#5a3a14" },
        { x: 812, y: 782, fill: "#f6c6cf", line: "#e08a9a", text: "#6b1f2e" },
        { x: 478, y: 884, fill: "#f6c6cf", line: "#e08a9a", text: "#6b1f2e" },
      ].map((s) => (
        <g key={s.x}>
          <rect x={s.x - 28} y={s.y - 12} width="56" height="24" rx="3" fill={s.fill} stroke={s.line} strokeWidth="1.500" />
          <text x={s.x} y={s.y + 6} textAnchor="middle" fontSize="16" fill={s.text}>
            EO90
          </text>
        </g>
      ))}
    </svg>
  );
}

/* ---------- radar chart ---------- */

const SITES = [
  { name: "Rethymno NTUA", color: "#0077b8", values: [2.27, 1.58, 0.79, 1.04, 1.36] },
  { name: "Rethymno Group 2", color: "#ff7f0e", values: [3.21, 1.69, 0.44, 0.93, 2.41] },
  { name: "Rethymno Group 4", color: "#00a02c", values: [2.63, 2.79, 2.15, 0.77, 3.41] },
  { name: "Rethymno Group 5", color: "#ff1f26", values: [2.9, 0, 0, 0, 1.86] },
  { name: "Rethymno Group 7", color: "#a265c4", values: [2.33, 1.8, 1.28, 1.06, 1.23] },
  { name: "Rethymno Group 8", color: "#99564b", values: [2.36, 1.23, 0.69, 1.33, 1.72] },
];

const CX = 508;
const CY = 431;
const STEP = 76.8;

function point(axis: number, value: number) {
  const a = (axis * 72 * Math.PI) / 180;
  return [CX + Math.sin(a) * value * STEP, CY - Math.cos(a) * value * STEP];
}

function polygon(values: number[]) {
  return values.map((v, i) => point(i, v).join(",")).join(" ");
}

function Radar() {
  return (
    <svg viewBox="0 0 1013 800" className="min-w-0 flex-1" fontFamily="Liberation Sans, Arial, sans-serif" role="img" aria-label="Flood resilience radar chart">
      <g fill="none" stroke="#dcdcdc" strokeWidth="2">
        {[1, 2, 3, 4].map((v) => (
          <polygon key={v} points={polygon([v, v, v, v, v])} />
        ))}
      </g>
      <g stroke="#999" strokeWidth="2">
        {[0, 1, 2, 3, 4].map((i) => {
          const [x, y] = point(i, 5);
          return <line key={i} x1={CX} y1={CY} x2={x} y2={y} />;
        })}
      </g>
      <g fontSize="21" fill="#777">
        {[5, 4, 3, 2, 1].map((v) => (
          <text key={v} x={CX + 8} y={CY + 15 - v * STEP}>
            {v.toFixed(2)}
          </text>
        ))}
      </g>
      {SITES.map((s) => (
        <polygon key={s.name} points={polygon(s.values)} fill={s.color} fillOpacity=".4" stroke={s.color} strokeWidth="3" />
      ))}
      {SITES.map((s) =>
        s.values.map((v, i) => {
          const [x, y] = point(i, v);
          return <circle key={`${s.name}${i}`} cx={x} cy={y} r="8" fill={s.color} />;
        })
      )}
      <g fontSize="20" fill="#000">
        <text x="508" y="30" textAnchor="middle">Natural</text>
        <text x="109" y="317" textAnchor="middle">Social</text>
        <text x="906" y="317" textAnchor="middle">Physical</text>
        <text x="261" y="781" textAnchor="middle">Economic</text>
        <text x="754" y="781" textAnchor="middle">Institutional</text>
      </g>
      <text x="800" y="16" fontSize="18" fill="#404040">Sites</text>
      {SITES.map((s, i) => (
        <g key={s.name}>
          <rect x="807" y={31 + i * 30.7} width="16" height="16" fill={s.color} />
          <text x="827" y={45 + i * 30.7} fontSize="17" fill="#777">
            {s.name}
          </text>
        </g>
      ))}
    </svg>
  );
}

/* ---------- plugin tool ---------- */

const INDICATORS = [
  { label: "Protection againsts wildfires", value: 2, text: "text-[21px] text-[#666]" },
  { label: "Protection against soil errosion", value: 2, text: "text-[21px] text-[#666]" },
  { label: "Level of dishcarge capacity of rivers and channels to convey peak discharges", value: 3, text: "text-[23px] text-[#444]" },
  { label: "Protection from a flood originating by a 1 meter river level rise.", value: 1, text: "text-[23px] text-[#444]" },
  { label: "Level of coverage of the region with forests and dense vegetation", value: 3, text: "text-[25px] text-[#222]" },
];

const DIMENSIONS = ["NATURAL", "SOCIAL", "ECONOMIC", "INSTITUTIONAL", "PHYSICAL"];

function IndicatorRow({ label, initial, text }: { label: string; initial: number; text: string }) {
  const [value, setValue] = useState(initial);
  const pct = value * 20;
  return (
    <div className="flex h-[97px] items-start">
      <label htmlFor={label} className={`mt-[2px] w-[482px] text-right leading-[34px] ${text}`}>
        {label}
        {"\u00a0\u00a0"}
      </label>
      <div className="mt-[13px] ml-[46px]">
        <div
          className="flex h-4 w-[323px] items-center rounded-md shadow-[inset_0_2px_2px_rgba(0,0,0,0.12)]"
          style={{ background: `linear-gradient(to right, #abeafd ${pct}%, #f9f9f9 ${pct}%)` }}
        >
          <input
            id={label}
            type="range"
            min={0}
            max={5}
            value={value}
            onChange={(e) => setValue(Number(e.target.value))}
            className="-mx-4 w-[355px] shrink-0 appearance-none bg-transparent [&::-webkit-slider-thumb]:size-8 [&::-webkit-slider-thumb]:appearance-none [&::-webkit-slider-thumb]:rounded-full [&::-webkit-slider-thumb]:bg-[#00aeff]"
          />
        </div>
        <label className="mt-[9px] ml-3 flex h-12 w-[124px] items-center gap-[6px] rounded-sm border border-[#d0d0d0] bg-[#e2e2e2] pl-[14px] font-[Inter,sans-serif] text-[17px] text-[#333] shadow-[inset_0_4px_5px_rgba(0,0,0,0.18)]">
          <span className="grid size-5">
            <input type="checkbox" defaultChecked className="peer col-start-1 row-start-1 size-5 appearance-none border-2 border-[#b5b5b5] bg-[#f3f3f3]" />
            <svg viewBox="0 0 20 20" className="pointer-events-none invisible col-start-1 row-start-1 peer-checked:visible" aria-hidden="true">
              <path d="M5 9 L9 15 L16 4" fill="none" stroke="#555" strokeWidth="2.500" />
            </svg>
          </span>
          Enabled
        </label>
      </div>
    </div>
  );
}

function Seal() {
  return (
    <svg viewBox="0 0 124 124" className="size-[124px]" aria-hidden="true">
      <circle cx="62" cy="62" r="60" fill="#fff" stroke="#111" strokeWidth="3" />
      <path id="rim" d="M27 98 A50 50 0 0 1 62 12 A50 50 0 0 1 111 72" fill="none" />
      <text fontSize="11" fontFamily="Liberation Sans, sans-serif" fill="#111">
        <textPath href="#rim">ΜΕΤΣΟΒΙΟΝ ΠΟΛΥΤΕΧΝΕΙΟΝ</textPath>
      </text>
      <path d="M56 22 Q60 14 67 18 Q69 24 66 29 L73 34 L79 46 L76 58 L75 68 L72 80 L78 94 L80 108 L73 110 L70 96 L64 82 L66 68 L58 80 L52 92 L52 106 L45 106 L46 90 L50 76 L56 64 L46 60 L38 58 L44 53 L56 54 L58 44 L50 38 L46 22 L49 21 L54 33 L60 32 Z" fill="#fff" stroke="#111" strokeWidth="2.500" />
      <path d="M63 36 V64 M68 36 L74 60 M60 66 L49 88 L48 100 M72 70 L69 84 L76 104 M60 46 H76 M60 54 H76" stroke="#111" strokeWidth="4" fill="none" />
      <path d="M35 110 H72 M36 105 H70 M40 100 H56" stroke="#111" strokeWidth="5" />
      <path d="M91 44 V106 M99 44 V102" stroke="#111" strokeWidth="5" />
      <path d="M86 30 L92 40 L98 30 M90 24 L96 42 M34 40 L26 48 M36 38 L28 60 L38 66" stroke="#111" strokeWidth="3" fill="none" />
    </svg>
  );
}

function MenuItem({ label }: { label: string }) {
  return (
    <button type="button" className="flex items-center gap-2">
      {label}
      <span className="border-x-[6px] border-t-[6px] border-x-transparent border-t-[#0077b8]" />
    </button>
  );
}

function PluginTool() {
  const [dimension, setDimension] = useState("NATURAL");
  return (
    <div className="flex min-h-0 flex-1 flex-col bg-white">
      <div className="flex min-h-0 flex-1">
        <div className="relative isolate min-w-0 flex-1 overflow-hidden font-['Liberation_Sans',Arial,sans-serif]">
          <svg className="absolute inset-0 -z-10 size-full" aria-hidden="true">
            <defs>
              <pattern id="waves" width="52" height="25" patternUnits="userSpaceOnUse">
                <path d="M-13 8 Q0 -3 13 4 T39 4 T65 4 M-13 21 Q0 9.500 13 16.500 T39 16.500 T65 16.500" fill="none" stroke="#f1f1f1" strokeWidth="2.500" />
              </pattern>
            </defs>
            <rect width="100%" height="100%" fill="url(#waves)" />
          </svg>
          <div className="flex h-[92px] items-center justify-center gap-2 bg-[#e7e7e7] pl-[30px] text-[22px] text-[#a0a0a0]">
            <p>This site gives access to an early version of the Knowledge Base. The final version will be available in December 2016.</p>
            <button type="button" aria-label="Dismiss">
              <svg viewBox="0 0 16 16" className="size-4">
                <path d="M2 2 L14 14 M14 2 L2 14" stroke="#0077b8" strokeWidth="5" />
              </svg>
            </button>
          </div>
          <div className="mt-4 flex h-[172px] items-center border-y-2 border-[#444] bg-[#e7e7e7] pl-[162px]">
            <Seal />
            <p className="min-w-0 flex-1 pt-[10px] pl-[44px] text-center font-[Inter,sans-serif] text-[22px] leading-[31px] text-[#333] italic">
              <b>Purpose</b>: Calculate the resilience of your city in five different dimensions and visualize the results compared to other cities.
              <br />
              <b>How to use</b>: <b>(1)</b> Select a city from the drop- down menu. <b>(2)</b> Select one of the five Dimensions. <b>(3)</b> Move the sliders of the indicators to see the
              <br />
              effect on the radar chart and the Flood Resilience Index (FRI). The size of the font of each indicator is proportional to its weight. <b>(4)</b> Click on an
              <br />
              indicator to navigate to resilience measures that might influence it (in preparation).
            </p>
          </div>
          <h1 className="mt-[41px] pl-[42%] text-[46px] leading-[60px] text-[#999]">Flood Resilience</h1>
          <div className="mt-[26px] flex items-start">
            <Radar />
            <div className="w-[907px] shrink-0 rounded-l-lg border border-r-0 border-[#ddd] bg-linear-to-b from-[#e8e8e8] to-[#f5f5f5] pr-4 pl-[30px] shadow-[inset_0_1px_3px_rgba(0,0,0,0.1)]">
              <nav className="flex gap-12 border-b-[3px] border-[#a0a0a0] pt-[46px] pb-[36px] pl-6 text-[22px] leading-[30px] text-[#0077b8]">
                <MenuItem label="File" />
                <MenuItem label="Sites" />
                <MenuItem label="View" />
                <MenuItem label="Language" />
                <a href="#help" className="flex items-center gap-1">
                  Help
                  <span className="flex size-[23px] items-center justify-center rounded-full bg-[#0077b8] text-[18px] font-bold text-white">?</span>
                </a>
              </nav>
              <div className="mt-[22px] flex h-[53px] items-center justify-between">
                <h2 className="text-[37px] leading-[53px] text-[#999]">Rethymno NTUA</h2>
                <button type="button" className="flex h-[53px] w-[143px] items-center justify-center gap-2 rounded-md border border-[#005f96] bg-linear-to-b from-[#0080c6] to-[#005c90] text-[22px] text-white">
                  FRI:
                  <span className="h-[29px] rounded-full bg-white px-2 text-[19px] leading-[29px] font-bold text-[#0077b8]">1.39</span>
                </button>
              </div>
              <div className="mt-[39px] flex h-16 font-[Inter,sans-serif] text-[18px] text-[#333]">
                {DIMENSIONS.map((d) => (
                  <button
                    key={d}
                    type="button"
                    onClick={() => setDimension(d)}
                    className={`-mr-[2px] border-2 px-[26px] ${
                      d === dimension ? "border-dashed border-[#888] bg-[#666] text-white" : "border-[#cfcfcf] bg-[#f2f2f2]"
                    }`}
                  >
                    {d}
                  </button>
                ))}
              </div>
              <div className="mt-[27px]">
                {INDICATORS.map((it) => (
                  <IndicatorRow key={it.label} label={it.label} initial={it.value} text={it.text} />
                ))}
              </div>
              <p className="mt-[50px] pb-[32px] text-right text-[19px] leading-7 text-[#999]">Data provider: FRI manager</p>
            </div>
          </div>
        </div>
        <VScroll size="h-[97%]" wide />
      </div>
      <div className="flex h-[31px] shrink-0 bg-[#f0f0f0]">
        <button type="button" aria-label="Scroll left" className="flex w-[60px] items-center justify-end pr-2">
          <Chevron dir="left" className="size-6" />
        </button>
        <div className="flex-1 bg-[#cdcdcd]" />
        <button type="button" aria-label="Scroll right" className="mr-[30px] flex w-20 items-center justify-center">
          <Chevron dir="right" className="size-6" />
        </button>
      </div>
    </div>
  );
}

/* ---------- app ---------- */

function TitleBar() {
  return (
    <div className="flex h-[75px] shrink-0 items-start justify-between pt-[38px] pr-[37px] pl-1">
      <svg viewBox="0 0 28 24" className="h-6 w-7" aria-hidden="true">
        <rect x="1" y="1" width="26" height="22" fill="#eee" stroke="#b3b8c4" strokeWidth="2" />
        <rect x="4" y="5" width="9" height="15" fill="#17968c" />
        <rect x="21" y="5" width="4" height="10" fill="#8fd0a8" />
      </svg>
      <div className="flex gap-[62px] pt-[1px]">
        {["M1 10 H20", "M2 6 H14 V19 H2 Z M6 6 V2 H18 V15 H14", "M2 2 L18 18 M18 2 L2 18"].map((d, i) => (
          <button key={d} type="button" aria-label={["Minimize window", "Restore window", "Close window"][i]}>
            <svg viewBox="0 0 20 20" className="size-5">
              <path d={d} fill="none" stroke="#111" strokeWidth="2" />
            </svg>
          </button>
        ))}
      </div>
    </div>
  );
}

function Toolbar() {
  return (
    <div className="flex h-[94px] shrink-0 items-start pt-[7px]">
      <Grip className="mt-[2px] ml-[11px] h-[68px] border-l-4" />
      <button type="button" aria-label="Roles" className="ml-[14px] flex h-[67px] items-center">
        <ColourWheel />
      </button>
      <Grip className="mt-[2px] ml-[22px] h-[68px] border-l-4" />
      <button type="button" aria-label="Flood home" className="ml-[9px] flex h-[67px] w-[70px] items-center justify-center border-2 border-[#7cc8f2] bg-[#b5dcf3]">
        <FloodHouse />
      </button>
      <div className="ml-[6px] flex gap-[13px]">
        <button type="button" aria-label="2D view" className="flex h-[67px] items-center">
          <GlobeText text="2D" />
        </button>
        <button type="button" aria-label="3D view" className="flex h-[67px] items-center">
          <GlobeText text="3D" />
        </button>
        <button type="button" aria-label="Mobile" className="flex h-[67px] items-center">
          <RoundTool>
            <rect x="17" y="10" width="25" height="38" rx="2" fill="#fff" stroke="#111" strokeWidth="2.500" />
            <rect x="20" y="13" width="19" height="28" fill="#fff" stroke="#2a9ae0" strokeWidth="2.500" />
            <circle cx="29.500" cy="44.500" r="1.500" fill="#111" />
          </RoundTool>
        </button>
      </div>
      <div className="flex-1" />
      <Grip className="mt-[1px] h-10 border-l-4" />
      <div className="ml-5 flex h-[41px] items-center text-[21px]">
        <svg viewBox="0 0 24 28" className="h-7 w-6" aria-hidden="true">
          <path d="M2 27 Q0 17 8 15 H16 Q24 17 23 26 Q14 29 2 27Z" fill="#17758f" />
          <path d="M8 15 L12 21 L15 15 Z" fill="#fff" />
          <ellipse cx="11" cy="8" rx="6" ry="8" fill="#eab676" />
          <path d="M4 7 Q4 0 11 0 Q18 0 17 10 Q15 4 9 4 Q5 4 4 7Z" fill="#a86018" />
        </svg>
        <span className="ml-[20px]">Lykou Archontia</span>
        <svg viewBox="0 0 30 28" className="ml-[34px] h-7 w-[30px]" aria-hidden="true">
          <path d="M5 14 L14 27 L27 20 V10 L14 4 Z" fill="#e9e6e6" stroke="#bbb" />
          <path d="M0 12 L14 3 L18 0 L30 12 L20 18 L14 8 L3 17 Z" fill="#e8313c" />
          <circle cx="20" cy="9" r="3" fill="#f6b6ba" />
          <path d="M12 19 L16 17 V24 L12 25Z" fill="#d9953c" />
        </svg>
        <span className="ml-[16px]">National Technical Univercity of Athens</span>
      </div>
      <Grip className="mt-[1px] ml-[36px] h-[82px] border-l-4" />
      <div className="w-[297px] pl-[13px] whitespace-nowrap">
        <p className="font-['DejaVu_Sans',sans-serif] text-[60px] leading-[54px] font-bold text-[#7f92c8]">satways</p>
        <p className="pl-6 font-['Liberation_Serif',serif] text-[17px] leading-6 font-bold text-black italic">Redefining Command &amp; Control</p>
      </div>
    </div>
  );
}

function FastViews() {
  return (
    <aside className="flex w-[57px] shrink-0 flex-col items-center pt-[10px]">
      <Grip className="w-10 border-t-4" />
      <button type="button" aria-label="Open perspective" className="mt-[19px]">
        <svg viewBox="0 0 28 26" className="h-[26px] w-7">
          <rect x="2" y="5" width="10" height="20" fill="#e8f6fb" stroke="#c0a050" />
          <rect x="1" y="4" width="12" height="6" fill="#1f7fc4" />
          <path d="M20 0 L22 5 L27 7 L22 9 L20 14 L18 9 L13 7 L18 5 Z" fill="#c89410" />
          <path d="M20 4 V10 M17 7 H23" stroke="#fff5c8" strokeWidth="1.500" />
        </svg>
      </button>
      <button type="button" aria-label="Console" className="mt-[24px]">
        <svg viewBox="0 0 28 24" className="h-6 w-7">
          <rect x="1" y="1" width="26" height="22" fill="#ddd" stroke="#999" strokeWidth="2" />
          <rect x="4" y="4" width="20" height="16" fill="#333" />
          <path d="M6 7 L12 11" stroke="#999" />
        </svg>
      </button>
      <div className="mt-[34px] flex h-[116px] w-12 flex-col items-center rounded-b-xl border-2 border-[#c9c9c9] pt-2">
        <Grip className="w-10 border-t-4" />
        <button type="button" aria-label="Restore view" className="mt-5">
          <svg viewBox="0 0 14 16" className="h-4 w-[14px]">
            <path d="M4 1 H13 V9 H9 M1 7 H9 V15 H1 Z M4 3 H13 M1 9 H9 M4 1 V7" fill="none" stroke="#6a5f58" strokeWidth="2" />
          </svg>
        </button>
        <button type="button" aria-label="Plugin tool" className="mt-3 flex h-[38px] w-[42px] shrink-0 items-center justify-center border-2 border-[#8fd0f5] bg-[#b5dcf3]">
          <Hammer className="h-[26px] w-7" />
        </button>
      </div>
    </aside>
  );
}

export default function App() {
  return (
    <div className="flex h-screen flex-col bg-white pr-[30px] pb-[29px] pl-[37px] font-['Open_Sans',sans-serif] text-[20px] leading-[30px] text-black">
      <TitleBar />
      <nav className="flex h-[30px] shrink-0 gap-[26px] pl-[13px]">
        {["System", "Users", "Preferences", "Windows", "Help"].map((m) => (
          <button key={m} type="button">
            {m}
          </button>
        ))}
      </nav>
      <div className="flex min-h-0 flex-1 flex-col bg-[#f0f0f0]">
        <Toolbar />
        <main className="flex min-h-0 flex-1 pl-[9px]">
          <div className="grid min-w-0 flex-1 grid-cols-[587px_minmax(0,849fr)_minmax(0,1960fr)] grid-rows-[minmax(0,1fr)] gap-[6px]">
            <div className="grid min-h-0 grid-rows-[minmax(0,823fr)_minmax(0,829fr)] gap-[6px]">
              <Panel
                id="tab-tools"
                title="Flood Tools Explorer"
                icon={<Swirl />}
                closable
                className="rounded-tr-[14px]"
                controls={
                  <div className="flex gap-[15px]">
                    <PuzzleAdd />
                    <MinMax />
                  </div>
                }
              >
                <FloodTools />
              </Panel>
              <Panel id="tab-layers" title="Layer Explorer" icon={<LayersIcon />} closable className="rounded-tr-[14px]" controls={<MinMax />}>
                <LayerTree />
              </Panel>
            </div>
            <Panel id="tab-map" title="2D Map" icon={<GreenGlobe />} closable className="border-r-0">
              <div className="relative -mr-[3px] flex min-h-0 flex-1 flex-col overflow-hidden">
                <MapDrawing />
                <div className="absolute top-[18px] left-[17px] flex w-12 flex-col rounded-md bg-white text-[30px] font-bold shadow-[0_2px_5px_rgba(0,0,0,0.6)]">
                  <button type="button" aria-label="Zoom in" className="h-12 border-b-2 border-[#ccc]">
                    +
                  </button>
                  <button type="button" aria-label="Zoom out" className="h-12">
                    −
                  </button>
                </div>
              </div>
            </Panel>
            <Panel id="tab-plugin" title="Plugin Tool" icon={<Hammer className="h-[26px] w-7" />} active className="rounded-tr-[14px]" controls={<MinMax />}>
              <PluginTool />
            </Panel>
          </div>
          <FastViews />
        </main>
        <footer className="flex h-[55px] shrink-0 items-start justify-end pt-1 pr-[517px]">
          <Grip className="mr-[9px] h-10 border-l-4" />
          <div className="flex h-[38px] w-[264px] border-t-2 border-l-2 border-[#999]">
            <button type="button" className="w-[236px] bg-linear-to-r from-[#ffffe1] from-66% to-[#efefef] to-66% text-center">
              74M of 112M
            </button>
            <button type="button" aria-label="Run garbage collector" className="flex flex-1 items-center justify-center border-l-2 border-[#999]">
              <svg viewBox="0 0 20 28" className="h-7 w-5">
                <path d="M1 5 H19 V8 H1 Z M7 2 H13 V5 H7 Z" fill="#0f80b0" />
                <path d="M3 9 H17 V26 H3 Z" fill="#bfe3b4" stroke="#0f80b0" strokeWidth="2.500" />
                <path d="M8 10 V24 M12 10 V24" stroke="#0f80b0" strokeWidth="2" />
              </svg>
            </button>
          </div>
          <Grip className="ml-[12px] h-10 border-l-4" />
        </footer>
      </div>
    </div>
  );
}
